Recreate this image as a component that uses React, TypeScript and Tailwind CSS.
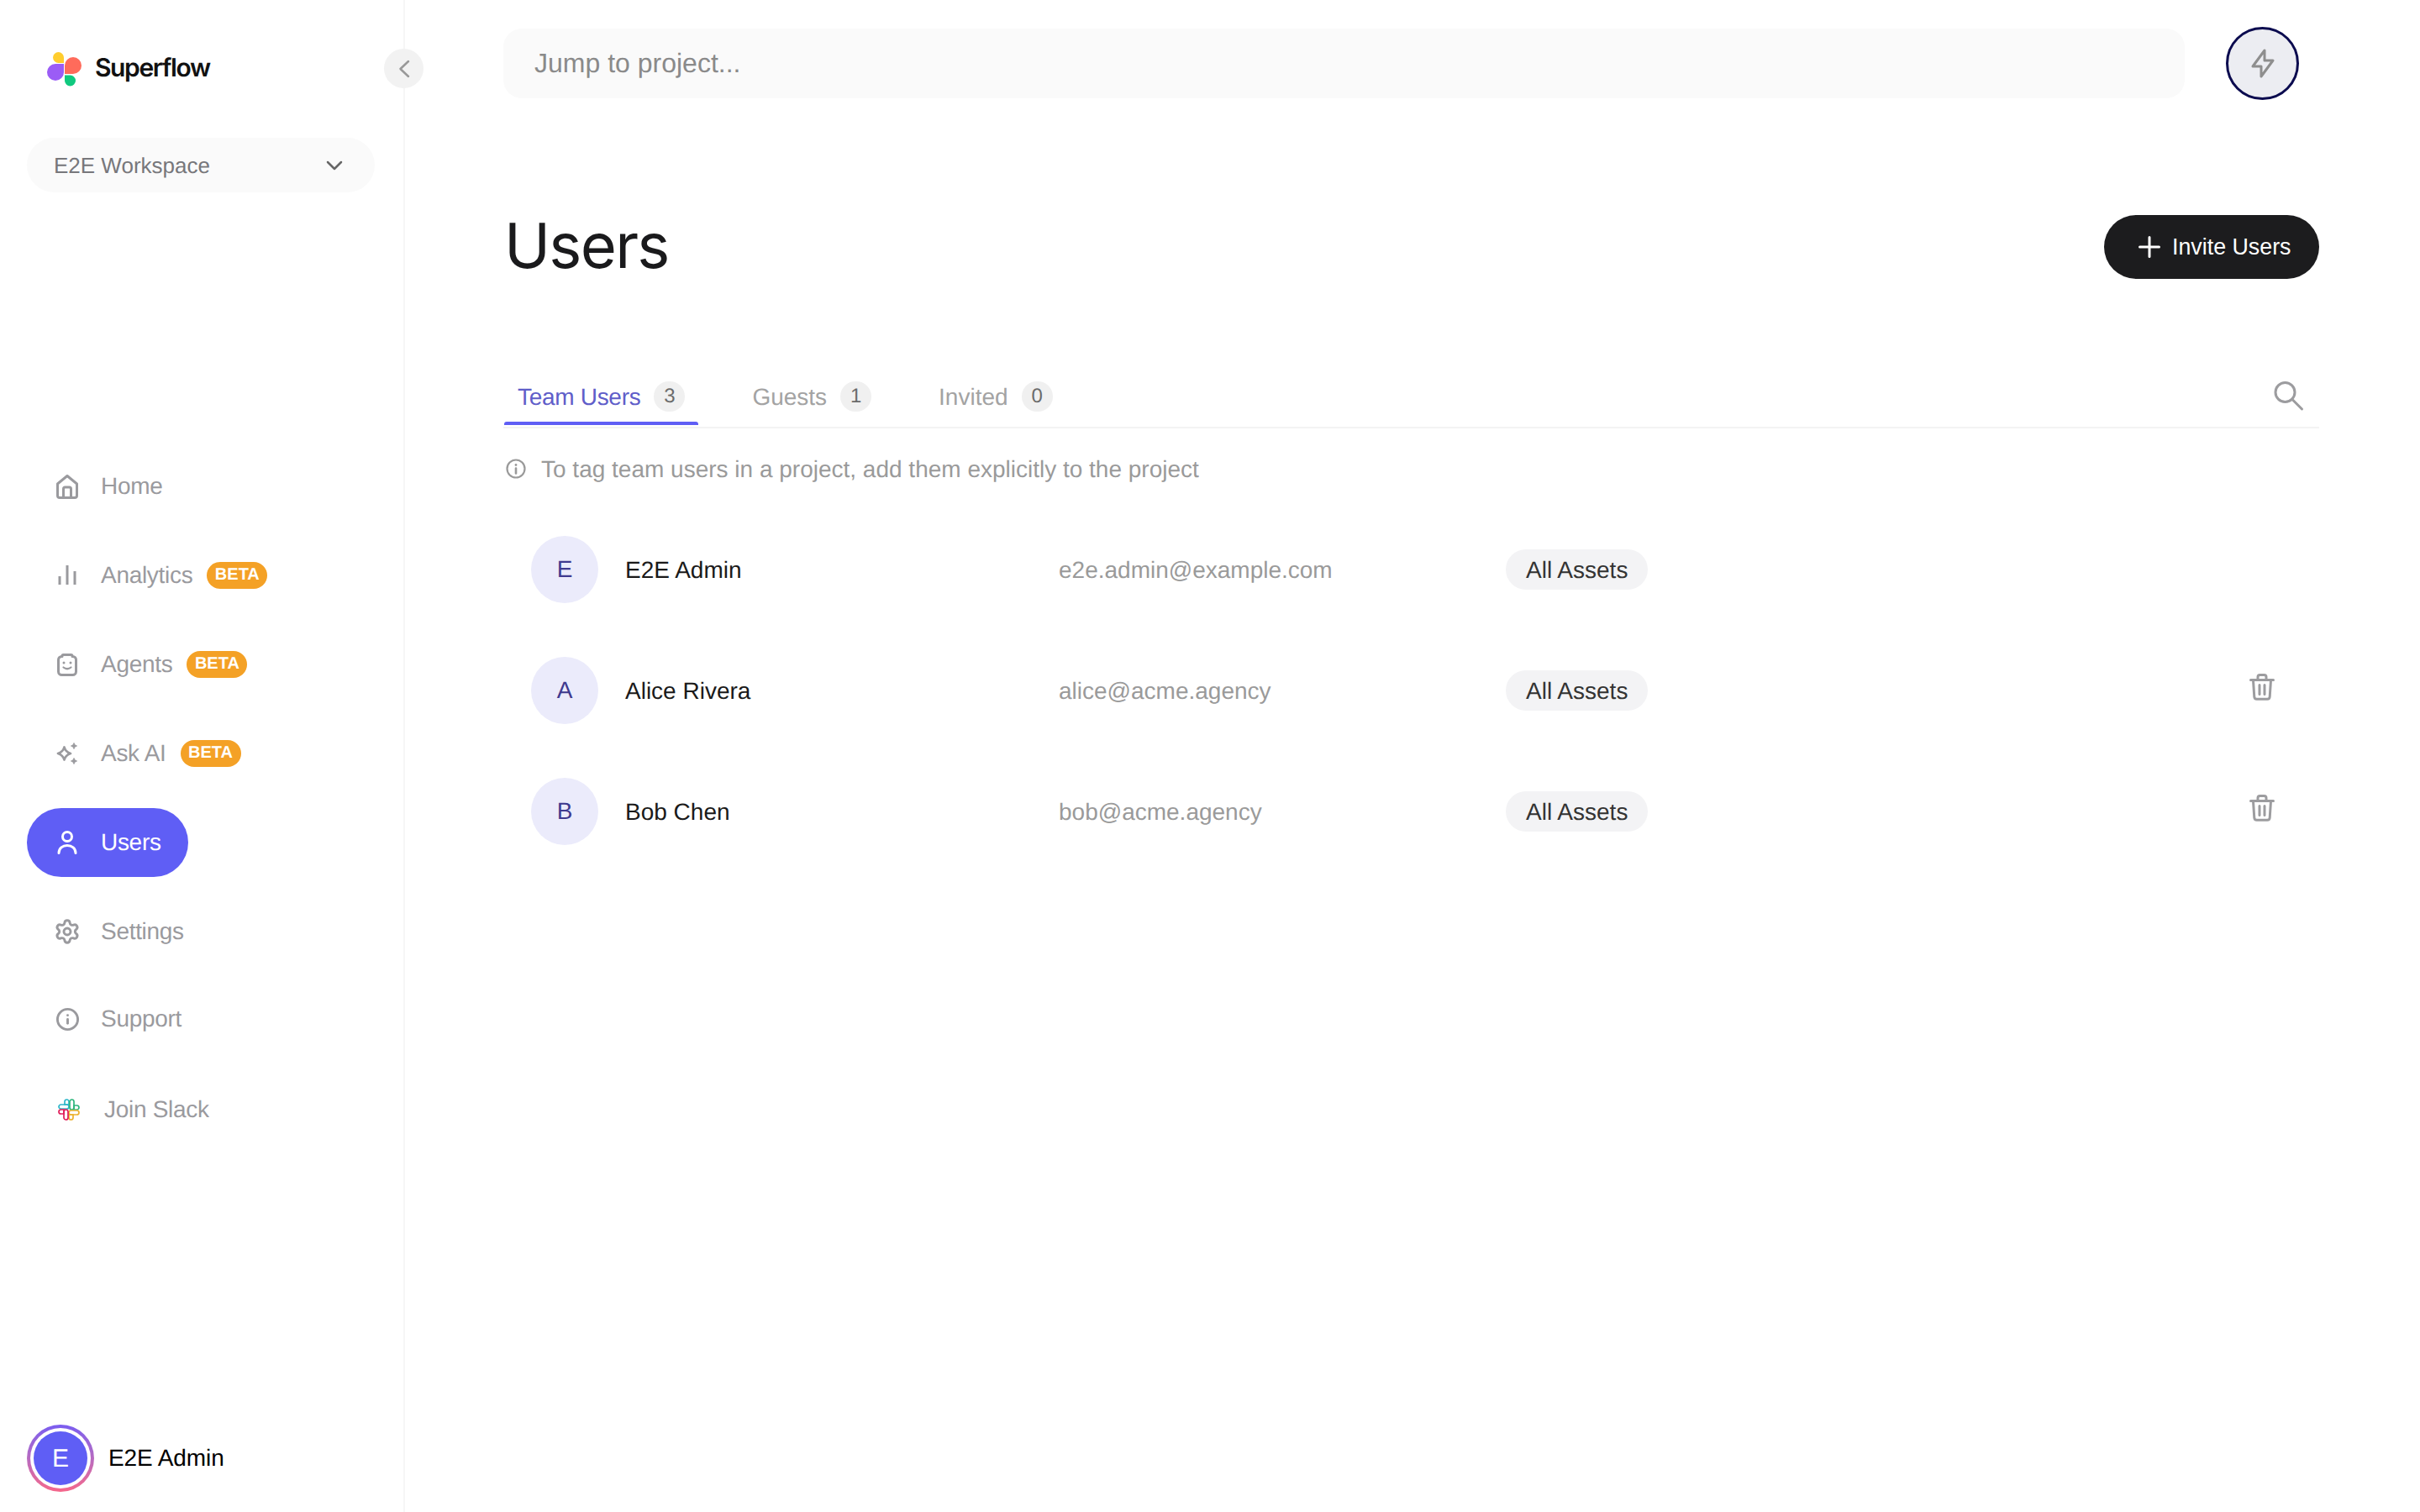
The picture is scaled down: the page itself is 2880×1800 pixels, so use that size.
import React from 'react';
import { Info, Settings } from 'lucide-react';

const sw = { fill: 'none', stroke: 'currentColor', strokeWidth: 3, strokeLinecap: 'round', strokeLinejoin: 'round' } as const;

function Logo() {
  return (
    <svg width="41" height="41" viewBox="0 0 41 41">
      <path d="M13.5 0a6.5 6.5 0 0 1 6.5 6.5V13h-6.5a6.5 6.5 0 0 1 0-13z" fill="#FFCD2E" />
      <path d="M21 16A10 10 0 0 1 31 6a10 10 0 0 1 0 20H21z" fill="#FF6B5B" />
      <path d="M10 14h10v10a10 10 0 0 1-20 0 10 10 0 0 1 10-10z" fill="#9B5CF6" />
      <path d="M21 27.5h6.5a6.5 6.5 0 0 1 0 13 6.5 6.5 0 0 1-6.5-6.5z" fill="#10C97F" />
    </svg>
  );
}

function HomeIcon() {
  return (
    <svg width="26" height="29" viewBox="0 0 26 29" {...sw}>
      <path d="M13 1.5 24.5 11v14a2.5 2.5 0 0 1-2.5 2.5H4A2.5 2.5 0 0 1 1.500 25V11z" />
      <path d="M8.500 27.500V17a2 2 0 0 1 2-2h5a2 2 0 0 1 2 2v10.500" />
    </svg>
  );
}

function BarsIcon() {
  return (
    <svg width="26" height="26" viewBox="0 0 26 26" {...sw} strokeLinecap="butt">
      <path d="M4 14v10M13 1v23M22 8v16" />
    </svg>
  );
}

function AgentIcon() {
  return (
    <svg width="26" height="27" viewBox="0 0 26 27" {...sw}>
      <path d="M7 3.500V3a1.500 1.500 0 0 1 1.500-1.500h9A1.500 1.500 0 0 1 19 3v.5h.5a4 4 0 0 1 4 4V21.500a4 4 0 0 1-4 4h-13a4 4 0 0 1-4-4V7.500a4 4 0 0 1 4-4z" />
      <circle cx="9" cy="11" r="1.500" fill="currentColor" stroke="none" />
      <circle cx="17" cy="11" r="1.500" fill="currentColor" stroke="none" />
      <path d="M8.500 16.500q4.500 3.500 9 0" strokeWidth="2.200" />
    </svg>
  );
}

function SparkIcon() {
  return (
    <svg width="26" height="26" viewBox="0 0 26 26">
      <path d="M9.500 5.500c1.100 4 3.300 6.200 7.500 7.500-4.200 1.300-6.400 3.500-7.500 7.500-1.100-4-3.300-6.200-7.500-7.500 4.200-1.300 6.400-3.500 7.500-7.500z" fill="none" stroke="currentColor" strokeWidth="2.800" strokeLinejoin="round" />
      <path d="M21 .5c.6 2.200 1.300 2.900 3.500 3.500-2.200.6-2.900 1.300-3.500 3.500-.6-2.200-1.300-2.900-3.500-3.500 2.200-.6 2.900-1.300 3.500-3.500z" fill="currentColor" stroke="currentColor" strokeLinejoin="round" />
      <path d="M21 18.500c.6 2.200 1.300 2.900 3.500 3.500-2.200.6-2.900 1.300-3.500 3.500-.6-2.200-1.300-2.900-3.500-3.500 2.200-.6 2.900-1.300 3.500-3.500z" fill="currentColor" stroke="currentColor" strokeLinejoin="round" />
    </svg>
  );
}

function UserIcon() {
  return (
    <svg width="24" height="28" viewBox="0 0 24 28" {...sw}>
      <circle cx="12" cy="7" r="5.500" />
      <path d="M2 26.500C2 21 6.500 17.500 12 17.500S22 21 22 26.500" />
    </svg>
  );
}

function SlackIcon() {
  return (
    <svg width="26" height="26" viewBox="0 0 26 26" fill="none" strokeWidth="1.700">
      <rect x="1" y="7" width="12" height="5" rx="2.500" stroke="#2EB6C9" />
      <path d="M13 7V3.500A2.500 2.500 0 1 0 8 3.500V7z" stroke="#2EB6C9" />
      <rect x="14" y="1" width="5" height="12" rx="2.500" stroke="#2EB67D" />
      <path d="M19 13h3.500a2.500 2.500 0 1 0 0-5H19z" stroke="#2EB67D" />
      <rect x="13" y="14" width="12" height="5" rx="2.500" stroke="#ECB22E" />
      <path d="M13 19v3.500a2.500 2.500 0 1 0 5 0V19z" stroke="#ECB22E" />
      <rect x="7" y="13" width="5" height="12" rx="2.500" stroke="#E01E5A" />
      <path d="M7 13H3.500a2.500 2.500 0 1 0 0 5H7z" stroke="#E01E5A" />
    </svg>
  );
}

function TrashIcon() {
  return (
    <svg width="30" height="32" viewBox="0 0 30 32" {...sw} className="text-[#9c9c9f]">
      <path d="M1.500 7.500h27" />
      <path d="M10 7V4a2.500 2.500 0 0 1 2.500-2.500h5A2.500 2.500 0 0 1 20 4v3" />
      <path d="M4.500 8l1.300 19.500a3 3 0 0 0 3 2.800h12.400a3 3 0 0 0 3-2.800L25.500 8" />
      <path d="M12 13.500v11M18 13.500v11" />
    </svg>
  );
}

const navItems = [
  { label: 'Home', icon: <HomeIcon /> },
  { label: 'Analytics', icon: <BarsIcon />, beta: true },
  { label: 'Agents', icon: <AgentIcon />, beta: true },
  { label: 'Ask AI', icon: <SparkIcon />, beta: true },
  { label: 'Users', icon: <UserIcon />, active: true },
  { label: 'Settings', icon: <Settings size={32} strokeWidth={2.200} className="shrink-0" /> },
  { label: 'Support', icon: <Info size={29} strokeWidth={2.400} className="shrink-0" />, nudge: '-mt-[2px] mb-[2px]' },
];

const tabs = [
  { label: 'Team Users', count: 3, active: true },
  { label: 'Guests', count: 1 },
  { label: 'Invited', count: 0 },
];

const users = [
  { initial: 'E', name: 'E2E Admin', email: 'e2e.admin@example.com', canDelete: false },
  { initial: 'A', name: 'Alice Rivera', email: 'alice@acme.agency', canDelete: true },
  { initial: 'B', name: 'Bob Chen', email: 'bob@acme.agency', canDelete: true },
];

function App() {
  return (
    <div className="flex h-screen bg-white overflow-hidden font-['Liberation_Sans',Arial,sans-serif] text-[28px] [text-rendering:geometricPrecision]">
      {/* Sidebar */}
      <aside className="relative w-[482px] shrink-0 border-r-2 border-[#f6f6f6] flex flex-col pt-[62px]">
        <div className="flex items-center h-[41px] pl-[56px] gap-[16px]">
          <Logo />
          <span className="font-['Inter',sans-serif] font-semibold text-[30px] tracking-[-1.400px] text-[#111] mb-[2px]">Superflow</span>
        </div>
        <button className="absolute left-[457px] top-[58px] w-[47px] h-[47px] rounded-full bg-[#f2f2f2] flex items-center justify-center text-[#999]">
          <svg width="14" height="22" viewBox="0 0 14 22" {...sw} strokeWidth="2.500"><path d="M12 2 2.500 11 12 20" /></svg>
        </button>

        <div className="mt-[61px] mx-[32px] w-[414px] h-[65px] rounded-full bg-[#fafafa] flex items-center justify-between pl-[32px] pr-[38px] text-[26px] text-[#77777b]">
          <span className="pt-[2px]">E2E Workspace</span>
          <svg width="20" height="12" viewBox="0 0 20 12" {...sw} strokeWidth="2.500" className="text-[#666]"><path d="M2 2l8 8 8-8" /></svg>
        </div>

        <nav className="mt-[309px] flex flex-col gap-[24px] items-start">
          {navItems.map((item) => (
            <div key={item.label} className={`ml-[32px] flex items-center h-[82px] ${item.nudge ?? ''}`}>
              <div className={`flex items-center h-full rounded-full pl-[34px] pr-[32px] gap-[26px] tracking-[-0.3px] ${item.active ? 'bg-[#5f5ef5] text-white' : 'text-[#9a9a9e]'}`}>
                <span className="w-[28px] flex justify-center shrink-0">{item.icon}</span>
                <span>{item.label}</span>
              </div>
              {item.beta && (
                <span className="ml-[-15px] h-[32px] rounded-full bg-[#f4a126] text-white font-bold text-[20px] leading-none flex items-center px-[9.500px] pb-[3px]">BETA</span>
              )}
            </div>
          ))}
          <div className="ml-[32px] flex items-center h-[82px] pl-[37px] gap-[29px] text-[#9a9a9e] tracking-[-0.3px]">
            <SlackIcon />
            <span>Join Slack</span>
          </div>
        </nav>

        <div className="mt-auto mb-[24px] ml-[32px] flex items-center gap-[17px]">
          <div className="w-[80px] h-[80px] rounded-full bg-linear-to-b from-[#7a5cf0] to-[#f5668a] p-1">
            <div className="w-full h-full rounded-full bg-white p-1">
              <div className="w-full h-full rounded-full bg-[#5f5ef5] text-white text-[30px] flex items-center justify-center">E</div>
            </div>
          </div>
          <span className="text-black tracking-[-0.1px]">E2E Admin</span>
        </div>
      </aside>

      {/* Main */}
      <main className="flex-1 pt-[32px] pl-[117px] pr-[120px]">
        <div className="flex items-center h-[87px]">
          <div className="w-[2001px] h-[83px] rounded-[22px] bg-[#fafafa] flex items-center pl-[37px] text-[32px] text-[#8a8a8a]">
            <span className="mb-[1px]">Jump to project...</span>
          </div>
          <div className="ml-[49px] w-[87px] h-[87px] rounded-full border-[3.500px] border-[#0b0b4f] bg-[#ecedf2] flex items-center justify-center text-[#8e8e8e]">
            <svg width="28" height="35" viewBox="0 0 28 35" {...sw}><path d="M16 2v12h10L12 33V21H2z" /></svg>
          </div>
        </div>

        <div className="mt-[137px] h-[76px] flex items-center justify-between pl-[1px]">
          <h1 className="font-['Inter',sans-serif] text-[74px] font-normal tracking-[-1.700px] text-[#1a1a1c] mb-[4px]">Users</h1>
          <button className="h-[76px] w-[256px] rounded-full bg-[#1c1c1e] text-white flex items-center pl-[41px] gap-[14px] text-[26.800px]">
            <svg width="26" height="26" viewBox="0 0 26 26" {...sw}><path d="M13 1.500v23M1.500 13h23" /></svg>
            <span className="pt-[1px]">Invite Users</span>
          </button>
        </div>

        <div className="mt-[122px] h-[56px] border-b-2 border-[#f3f3f3] flex items-start pl-[1px] relative">
          <div className="flex gap-[48px]">
            {tabs.map((tab) => (
              <div key={tab.label} className={`relative h-[54px] flex items-start px-[16px] gap-[16px] ${tab.active ? 'text-[#5f5ec9] tracking-[-0.300px]' : 'text-[#a3a3a3]'}`}>
                <span className="h-[36px] leading-[37px]">{tab.label}</span>
                <span className="w-[37px] h-[36px] rounded-full bg-[#f0f0f0] text-[#6b6b6b] text-[24px] flex items-center justify-center">{tab.count}</span>
                {tab.active && <div className="absolute left-0 right-0 bottom-[2px] h-[4px] rounded-t-[3px] bg-[#5f5ef5]" />}
              </div>
            ))}
          </div>
          <svg width="36" height="36" viewBox="0 0 36 36" {...sw} className="absolute right-[18px] top-0 text-[#9c9c9f]">
            <circle cx="13.500" cy="13" r="11.500" />
            <path d="M22 21.500 33.500 33" />
          </svg>
        </div>

        <div className="mt-[31px] h-[34px] flex items-center gap-[18px] pl-[3px] text-[#9a9a9a]">
          <svg width="24" height="24" viewBox="0 0 24 24" fill="none" stroke="currentColor" strokeWidth="2.200" strokeLinecap="round">
            <circle cx="12" cy="12" r="10.500" />
            <path d="M12 11.500v6" strokeWidth="2.600" />
            <circle cx="12" cy="7.500" r="1.400" fill="currentColor" stroke="none" />
          </svg>
          <span className="pt-[1px]">To tag team users in a project, add them explicitly to the project</span>
        </div>

        <div className="mt-[63px] flex flex-col gap-[64px]">
          {users.map((user) => (
            <div key={user.email} className="flex items-center h-[80px] pl-[33px]">
              <div className="w-[80px] h-[80px] rounded-full bg-[#ebebfb] text-[#3f3a8f] flex items-center justify-center">{user.initial}</div>
              <div className="ml-[32px] w-[516px] text-[#1a1a1a] pt-[1px]">{user.name}</div>
              <div className="w-[533px] text-[#9a9a9a] pt-[1px]">{user.email}</div>
              <div className="h-[48px] px-[24px] -ml-[1px] rounded-full bg-[#f3f3f5] text-[#333] flex items-center pt-[1px]">All Assets</div>
              {user.canDelete && (
                <div className="ml-auto mr-[53px] mb-[8px]"><TrashIcon /></div>
              )}
            </div>
          ))}
        </div>
      </main>
    </div>
  );
}

export default App;
